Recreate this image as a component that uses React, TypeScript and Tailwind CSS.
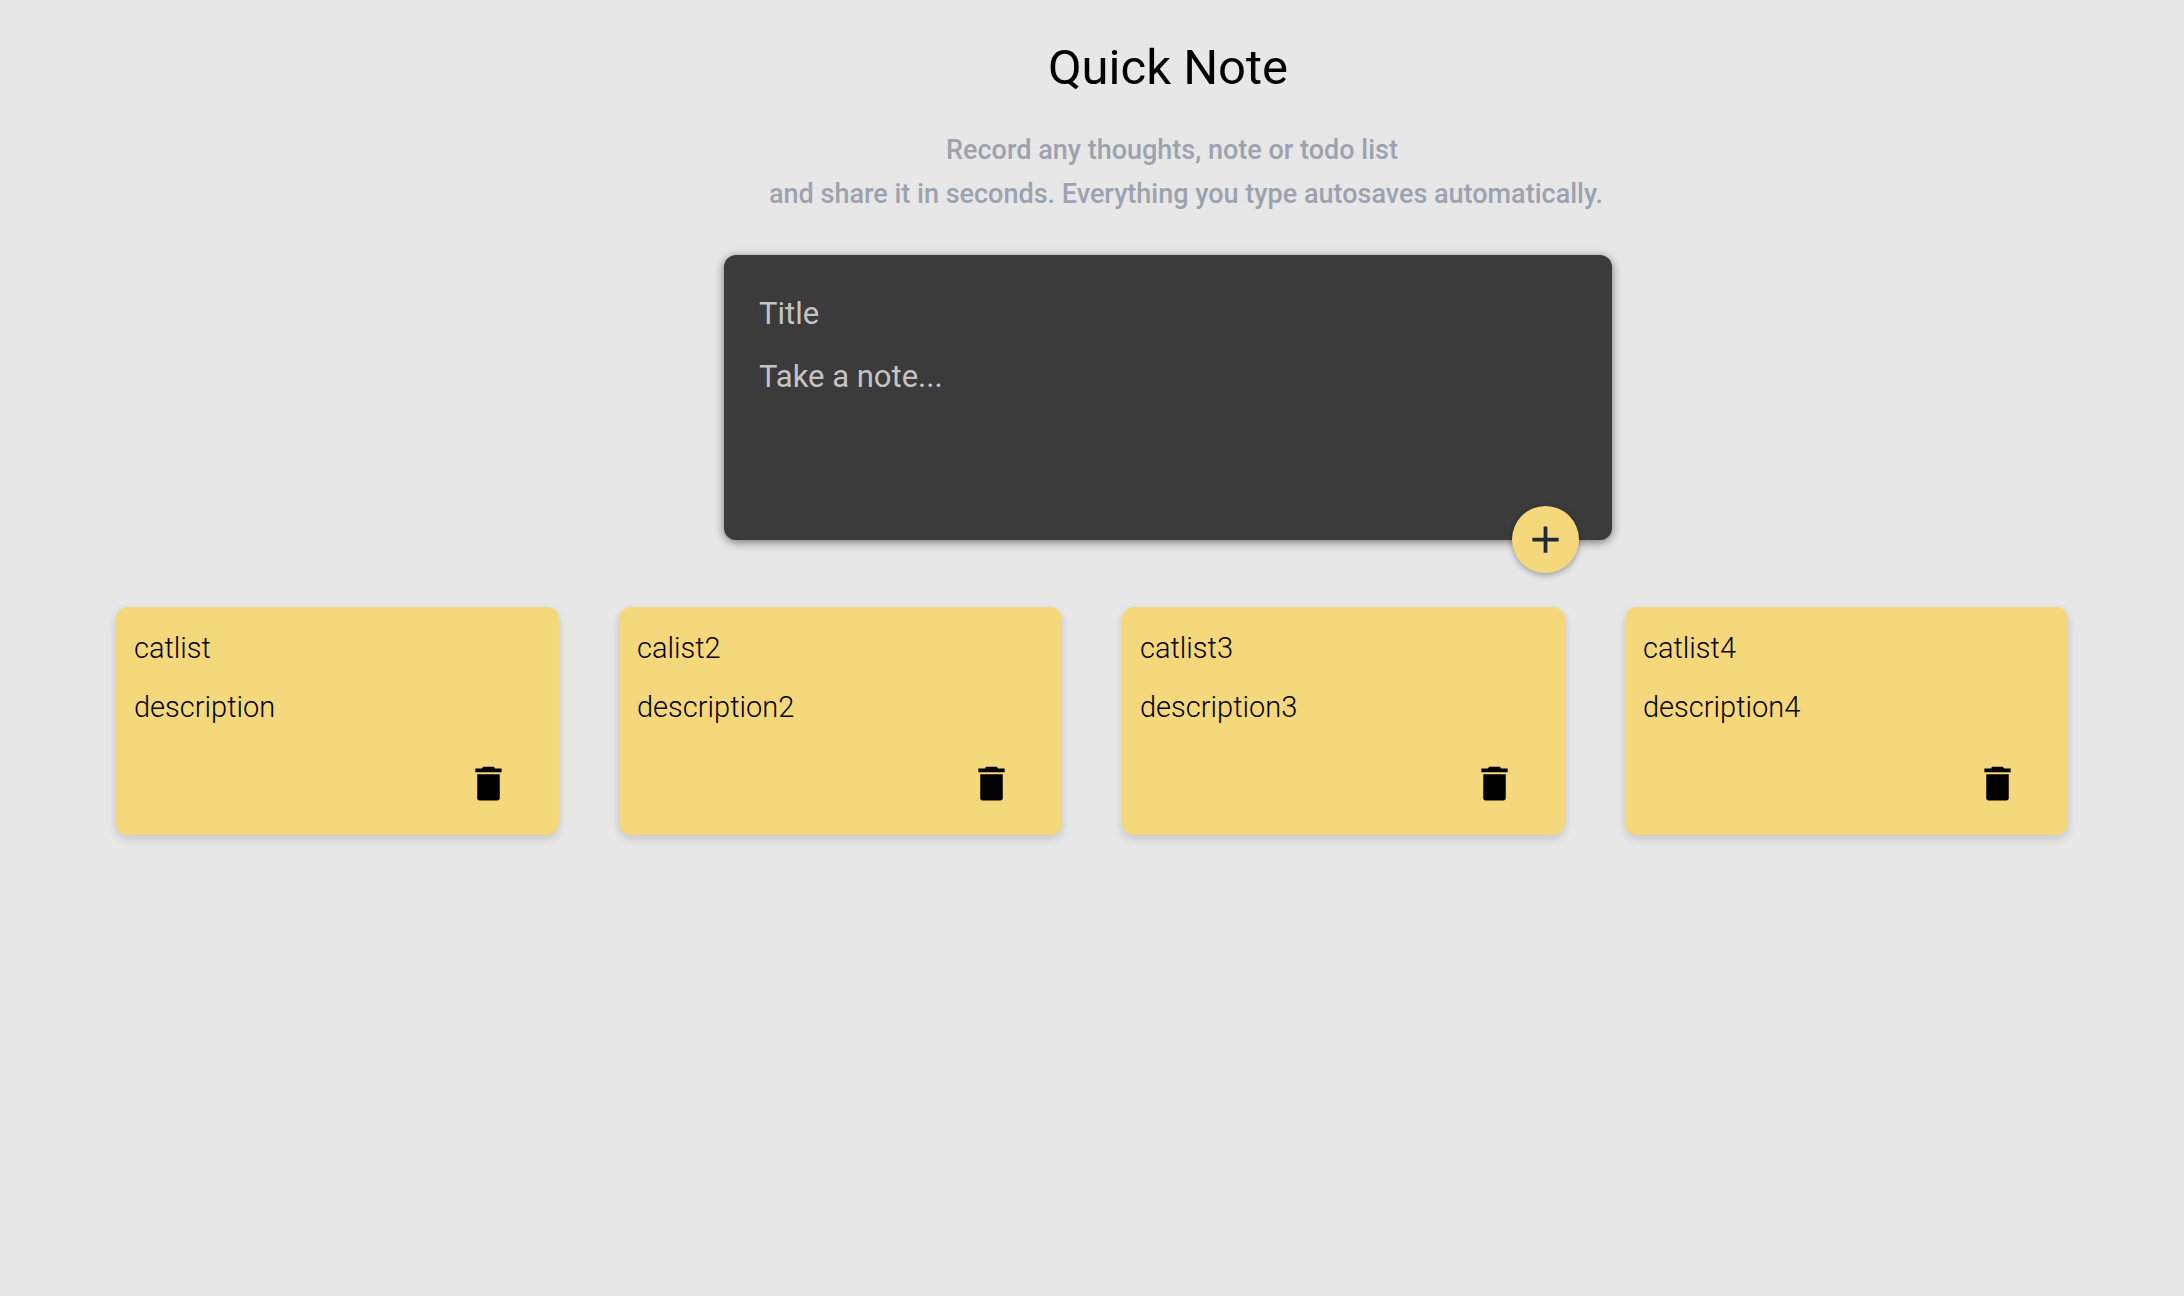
import { useState } from 'react';
import type { FormEvent } from 'react';
import { MdAdd } from 'react-icons/md';

type Note = { title: string; text: string };

const initialNotes: Note[] = [
  { title: 'catlist', text: 'description' },
  { title: 'calist2', text: 'description2' },
  { title: 'catlist3', text: 'description3' },
  { title: 'catlist4', text: 'description4' },
];

function TrashIcon() {
  return (
    <svg viewBox="0 0 24 24" className="size-[45px]" fill="currentColor" aria-hidden="true">
      <path d="M6 19.8c0 .66.54 1.2 1.2 1.2h9.6c.66 0 1.2-.54 1.2-1.2V7H6v12.8zM19 4h-3.5l-.6-1H9.1l-.6 1H5v2h14V4z" />
    </svg>
  );
}

function NoteCard({ note, onDelete }: { note: Note; onDelete: () => void }) {
  return (
    <article className="flex flex-col rounded-xl bg-[#f5d87c] px-[18px] pt-[19px] pb-[29px] text-[29px] font-light text-black shadow-[0_4px_10px_rgba(0,0,0,0.14)]">
      <h2 className="mb-[15px] leading-[44px]">{note.title}</h2>
      <p className="mb-8 leading-[44px]">{note.text}</p>
      <button type="button" aria-label={`Delete ${note.title}`} onClick={onDelete} className="mr-[30px] cursor-pointer self-end">
        <TrashIcon />
      </button>
    </article>
  );
}

export default function App() {
  const [notes, setNotes] = useState<Note[]>(initialNotes);
  const [title, setTitle] = useState('');
  const [text, setText] = useState('');

  const addNote = (e: FormEvent) => {
    e.preventDefault();
    if (!title && !text) return;
    setNotes([...notes, { title, text }]);
    setTitle('');
    setText('');
  };

  return (
    <main className="min-h-screen bg-[#e7e7e7] font-['Roboto',sans-serif]">
      <section className="flex flex-col items-center pt-[32px] pl-[152px]">
        <h1 className="text-[49px] leading-[72px] text-black">Quick Note</h1>
        <p className="mt-6 flex flex-col text-center text-[27px] leading-[44px] font-medium text-[#9ca3af]">
          <span className="pl-2">Record any thoughts, note or todo list</span>
          <span className="pl-9">and share it in seconds. Everything you type autosaves automatically.</span>
        </p>
        <form
          onSubmit={addNote}
          className="relative mt-[39px] flex w-full max-w-[888px] flex-col rounded-xl bg-[#3b3b3b] px-[35px] pt-[37px] pb-[53px] text-[31px] text-[#c4c4c4] shadow-[0_2px_10px_rgba(0,0,0,0.5)]"
        >
          <input
            aria-label="Title"
            placeholder="Title"
            value={title}
            onChange={(e) => setTitle(e.target.value)}
            className="mb-[19px] h-[44px] bg-transparent leading-[44px] outline-none placeholder:text-[#c4c4c4]"
          />
          <textarea
            aria-label="Note"
            placeholder="Take a note..."
            rows={3}
            value={text}
            onChange={(e) => setText(e.target.value)}
            className="resize-none bg-transparent leading-[44px] outline-none placeholder:text-[#c4c4c4]"
          />
          <button
            type="submit"
            aria-label="Add note"
            className="absolute right-[33px] -bottom-[33px] flex size-[67px] cursor-pointer items-center justify-center rounded-full bg-[#f5d87c] text-[#1f2937] shadow-[0_2px_6px_rgba(0,0,0,0.35)]"
          >
            <MdAdd className="size-[45px]" />
          </button>
        </form>
      </section>
      <section aria-label="Notes" className="mt-[67px] grid grid-cols-4 gap-[60px] px-[116px] pb-16">
        {notes.map((note, i) => (
          <NoteCard key={i} note={note} onDelete={() => setNotes(notes.filter((_, j) => j !== i))} />
        ))}
      </section>
    </main>
  );
}
